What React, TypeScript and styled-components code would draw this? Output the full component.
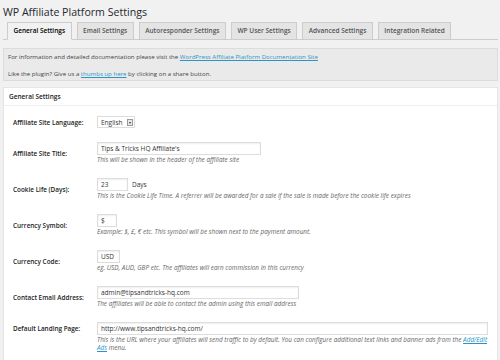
import styled, { createGlobalStyle } from "styled-components";

const GlobalStyle = createGlobalStyle`
  body {
    margin: 0;
    background: #f1f1f1;
    font-family: "Open Sans", "Liberation Sans", sans-serif;
    color: #444;
  }
  * { box-sizing: border-box; }
`;

const tabs = [
  "General Settings",
  "Email Settings",
  "Autoresponder Settings",
  "WP User Settings",
  "Advanced Settings",
  "Integration Related",
];

export default function App() {
  return (
    <Page>
      <GlobalStyle />
      <Title>WP Affiliate Platform Settings</Title>
      <TabBar>
        {tabs.map((t, i) => (
          <Tab key={t} $active={i === 0}>{t}</Tab>
        ))}
      </TabBar>

      <Notice>
        <p>
          For information and detailed documentation please visit the{" "}
          <Link>WordPress Affiliate Platform Documentation Site</Link>
        </p>
        <p>
          Like the plugin? Give us a <Link>thumbs up here</Link> by clicking on a share button.
        </p>
      </Notice>

      <Panel>
        <PanelHeader>General Settings</PanelHeader>
        <Form>
          <Row>
            <Label>Affiliate Site Language:</Label>
            <Field>
              <Select>
                English
                <Arrow />
              </Select>
            </Field>
          </Row>
          <Row>
            <Label>Affiliate Site Title:</Label>
            <Field>
              <Input $w={164} defaultValue="Tips & Tricks HQ Affiliate's" readOnly />
              <Desc>This will be shown in the header of the affiliate site</Desc>
            </Field>
          </Row>
          <Row>
            <Label>Cookie Life (Days):</Label>
            <Field>
              <Input $w={31} defaultValue="23" readOnly />
              <Unit>Days</Unit>
              <Desc>
                This is the Cookie Life Time. A referrer will be awarded for a sale if the sale is
                made before the cookie life expires
              </Desc>
            </Field>
          </Row>
          <Row>
            <Label>Currency Symbol:</Label>
            <Field>
              <Input $w={20} defaultValue="$" readOnly />
              <Desc>Example: $, £, € etc. This symbol will be shown next to the payment amount.</Desc>
            </Field>
          </Row>
          <Row>
            <Label>Currency Code:</Label>
            <Field>
              <Input $w={23} defaultValue="USD" readOnly />
              <Desc>eg. USD, AUD, GBP etc. The affiliates will earn commission in this currency</Desc>
            </Field>
          </Row>
          <Row>
            <Label>Contact Email Address:</Label>
            <Field>
              <Input $w={202} defaultValue="admin@tipsandtricks-hq.com" readOnly />
              <Desc>The affiliates will be able to contact the admin using this email address</Desc>
            </Field>
          </Row>
          <Row>
            <Label $top>Default Landing Page:</Label>
            <Field>
              <Input $w={391} defaultValue="http://www.tipsandtricks-hq.com/" readOnly />
              <Desc>
                <Nowrap>
                  This is the URL where your affiliates will send traffic to by default. You can
                  configure additional text links and banner ads from the <Link>Add/Edit</Link>
                </Nowrap>
                <br />
                <Link>Ads</Link> menu.
              </Desc>
            </Field>
          </Row>
        </Form>
      </Panel>
    </Page>
  );
}

const Page = styled.div`
  width: 500px;
  padding: 0 2px 0 3px;
`;

const Title = styled.h1`
  margin: 0;
  padding-top: 5px;
  font-size: 10.6px;
  line-height: 14px;
  font-weight: 400;
  color: #23282d;
`;

const TabBar = styled.div`
  display: flex;
  gap: 5px;
  margin-top: 3px;
  padding-left: 4px;
  border-bottom: 1px solid #ccc;
  height: 18px;
`;

const Tab = styled.div<{ $active?: boolean }>`
  height: 18px;
  line-height: 16px;
  padding: 0 5.5px;
  font-size: 6.5px;
  font-weight: 600;
  white-space: nowrap;
  border: 1px solid #ccc;
  border-bottom-color: ${(p) => (p.$active ? "#f1f1f1" : "#ccc")};
  background: ${(p) => (p.$active ? "#f1f1f1" : "#e4e4e4")};
  color: ${(p) => (p.$active ? "#000" : "#555")};
`;

const Notice = styled.div`
  margin-top: 8px;
  padding: 3px 4px 2px;
  background: #eaeaea;
  border: 1px solid #dcdcdc;
  font-size: 6.1px;
  color: #444;

  p {
    margin: 0;
    line-height: 9px;
  }
  p + p {
    margin-top: 8px;
  }
`;

const Link = styled.a`
  color: #2a95c5;
  text-decoration: underline;
`;

const Nowrap = styled.span`
  white-space: nowrap;
`;

const Panel = styled.div`
  margin-top: 6px;
  background: #fff;
  border: 1px solid #e5e5e5;
  min-height: 300px;
`;

const PanelHeader = styled.div`
  height: 18px;
  line-height: 17px;
  padding: 0 5px;
  border-bottom: 1px solid #eee;
  font-size: 6.5px;
  font-weight: 600;
  color: #222;
`;

const Form = styled.div`
  padding: 3px 0 0 9px;
`;

const Row = styled.div`
  display: grid;
  grid-template-columns: 84px 1fr;
`;

const Label = styled.div<{ $top?: boolean }>`
  align-self: ${(p) => (p.$top ? "start" : "center")};
  padding-top: ${(p) => (p.$top ? "9px" : "0")};
  font-size: 6.4px;
  line-height: 9px;
  font-weight: 600;
  color: #222;
`;

const Field = styled.div`
  padding: 7px 0;
  font-size: 6.5px;
  color: #333;
`;

const Input = styled.input<{ $w: number }>`
  width: ${(p) => p.$w}px;
  height: 13px;
  padding: 0 3px;
  border: 1px solid #ddd;
  box-shadow: inset 0 1px 2px rgba(0, 0, 0, 0.07);
  font-family: inherit;
  font-size: 6.5px;
  color: #333;
  background: #fff;
  outline: none;
  vertical-align: top;
`;

const Unit = styled.span`
  display: inline-block;
  margin-left: 4px;
  line-height: 13px;
  vertical-align: top;
`;

const Desc = styled.div`
  margin-top: 1px;
  font-size: 6.4px;
  line-height: 8px;
  font-style: italic;
  color: #666;
`;

const Select = styled.div`
  display: flex;
  align-items: center;
  justify-content: space-between;
  width: 38px;
  height: 12px;
  padding: 0 1px 0 3px;
  border: 1px solid #ddd;
  background: #fff;
  font-size: 6.5px;
  color: #333;
`;

const Arrow = styled.span`
  position: relative;
  width: 6px;
  height: 7px;
  border: 1px solid #999;
  background: #e8e8e8;

  &::after {
    content: "";
    position: absolute;
    left: 1px;
    top: 2px;
    border-left: 1.5px solid transparent;
    border-right: 1.5px solid transparent;
    border-top: 2px solid #333;
  }
`;
